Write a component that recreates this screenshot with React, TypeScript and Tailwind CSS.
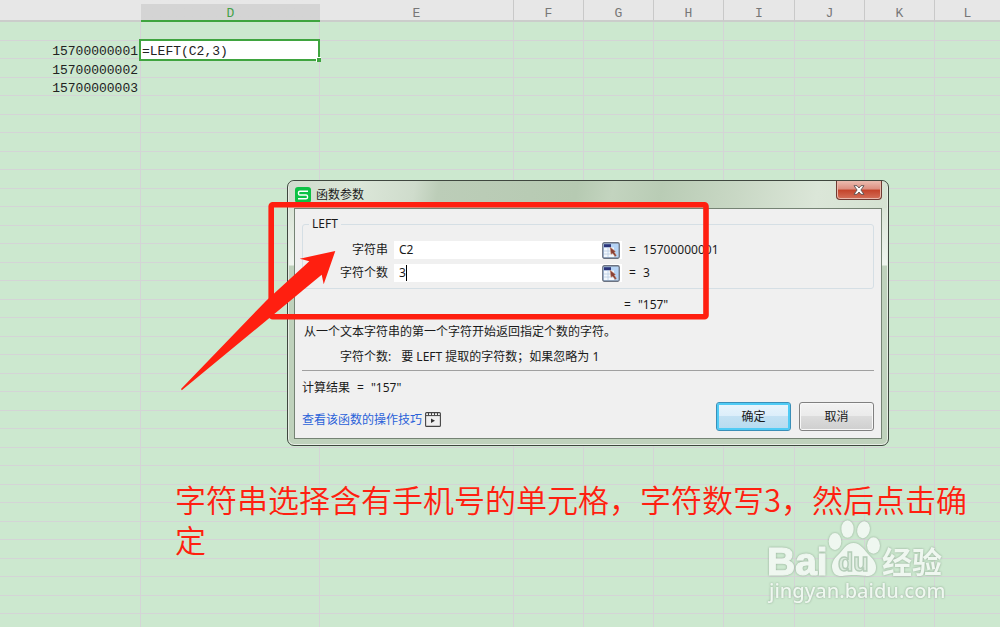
import React, { useState } from "react";

const COLUMNS = [
  { name: "C", width: "w-[141px]" },
  { name: "D", width: "w-[179px]" },
  { name: "E", width: "w-[194px]" },
  { name: "F", width: "w-[70px]" },
  { name: "G", width: "w-[70px]" },
  { name: "H", width: "w-[70px]" },
  { name: "I", width: "w-[71px]" },
  { name: "J", width: "w-[70px]" },
  { name: "K", width: "w-[70px]" },
  { name: "L", width: "w-auto" },
];

const PHONES: Record<number, string> = {
  2: "15700000001",
  3: "15700000002",
  4: "15700000003",
};

const ROWS = Array.from({ length: 33 }, (_, i) => i + 1);

function headerStyle(name: string) {
  if (name === "C") return "border-b-2 border-b-[#cbcdcb]";
  if (name === "D")
    return "border-b-2 border-[#3fa43f] bg-linear-to-b from-[#e7e7e7] from-20% to-[#d4d4d4] to-20% text-[#43a047]";
  if (name === "L") return "border-b-2 border-b-[#cbcdcb]";
  return "border-r border-b-2 border-r-[#c9c9c9] border-b-[#cbcdcb]";
}

function Sheet() {
  return (
    <table className="w-full table-fixed border-separate border-spacing-0 font-['Liberation_Mono','Noto_Sans_CJK_SC',monospace] text-[13px] leading-3">
      <thead>
        <tr className="h-[22px] bg-[#e7e7e7] text-[#777]">
          {COLUMNS.map(({ name, width }) => (
            <th
              key={name}
              scope="col"
              aria-label={name}
              className={`${width} h-[22px] p-0 font-normal ${headerStyle(name)}`}
            >
              {name === "C" ? null : <span className="block pt-2">{name}</span>}
            </th>
          ))}
        </tr>
      </thead>
      <tbody>
        {ROWS.map((row) => (
          <tr key={row} className={row % 2 ? "h-[19px]" : "h-[18px]"}>
            {COLUMNS.map(({ name }) => (
              <td
                key={name}
                className={`relative border-b border-[#d4d4d6] bg-[#cce8cf] p-0 text-right text-[#222] ${name === "L" ? "" : "border-r"}`}
              >
                {name === "C" && PHONES[row] ? (
                  <span className="block pt-[5px] pr-[2px]">{PHONES[row]}</span>
                ) : null}
                {name === "D" && row === 2 ? <ActiveCell /> : null}
              </td>
            ))}
          </tr>
        ))}
      </tbody>
    </table>
  );
}

function ActiveCell() {
  return (
    <div className="absolute -top-[2px] -right-[1px] -left-[2px] z-10 h-[22px] border-2 border-[#3fa43f] bg-white">
      <input
        aria-label="D2"
        defaultValue="=LEFT(C2,3)"
        className="block h-full w-full bg-white pt-[2px] pl-px text-[13px] text-[#222] outline-none"
      />
      <span className="absolute -right-[3px] -bottom-[3px] size-[5px] border-t border-l border-white bg-[#3fa43f]" />
    </div>
  );
}

function AppLogo() {
  return (
    <svg viewBox="0 0 16 16" className="size-4" aria-hidden="true">
      <rect width="16" height="16" rx="3" fill="#0cc244" />
      <path
        d="M13 4.300H5Q3.500 4.300 3.500 5.500V6.800Q3.500 8 5 8H11Q12.500 8 12.500 9.200V10.500Q12.500 11.700 11 11.700H3"
        fill="none"
        stroke="#fff"
        strokeWidth="1.4"
      />
    </svg>
  );
}

function PickRangeIcon() {
  return (
    <svg viewBox="0 0 18 17" className="h-[17px] w-[18px]" aria-hidden="true">
      <rect x="0.75" y="0.75" width="16.5" height="15.5" rx="1.5" fill="#b5d3f5" stroke="#6b7280" strokeWidth="1.3" />
      <path d="M2 5.5H12V15H2Z" fill="#f3f8fd" />
      <path d="M2 9H11M2 12H11M6 6V15" stroke="#b8cbe2" strokeWidth="0.8" />
      <rect x="2" y="2.2" width="7" height="3" fill="#2b357a" />
      <path d="M8 5L13.5 9.5L12.3 10.2L14.5 13.5L13 14.5L10.8 11.4L9 12.2Z" fill="#8a4036" stroke="#cf9c80" strokeWidth="0.5" />
    </svg>
  );
}

function VideoIcon() {
  return (
    <svg viewBox="0 0 16 15" className="h-[15px] w-4" aria-hidden="true">
      <rect x="0.6" y="0.6" width="14.8" height="13.8" rx="1" fill="none" stroke="#444" strokeWidth="1.1" />
      <path d="M1 3.6H15M3.5 1V3.6M6.5 1V3.6M9.5 1V3.6M12.5 1V3.6" stroke="#444" strokeWidth="1" />
      <path d="M6 6.5L10 8.8L6 11.1Z" fill="#333" />
    </svg>
  );
}

type ArgumentRowProps = {
  id: string;
  label: string;
  value: string;
  result: string;
  focused?: boolean;
};

function ArgumentRow({ id, label, value, result, focused }: ArgumentRowProps) {
  const [text, setText] = useState(value);
  return (
    <div className="flex h-[18px] items-center">
      <label htmlFor={id} className="w-[85px] text-right">
        {label}
      </label>
      <div className="ml-[6px] flex h-[18px] w-[228px] items-center bg-white pr-[2px]">
        <div className="relative min-w-0 flex-1">
          <input
            id={id}
            value={text}
            onChange={(e) => setText(e.target.value)}
            className="block h-4 w-full bg-transparent pl-[5px] outline-none"
          />
          {focused ? <span className="absolute top-0 left-3 h-4 w-px bg-black" /> : null}
        </div>
        <button type="button" aria-label={`选择${label}`}>
          <PickRangeIcon />
        </button>
      </div>
      <span className="w-[21px] pl-[7px]">=</span>
      <output htmlFor={id}>{result}</output>
    </div>
  );
}

function FunctionDialog() {
  return (
    <section
      role="dialog"
      aria-labelledby="dialog-title"
      className="absolute top-[180px] left-[287px] w-[602px] rounded-[7px] border border-[#3f473f] bg-[linear-gradient(to_bottom,#c9d8c5_0px,#dbe6d8_30px,#f0f5ef_84px,#bfd2bc_85px,#bfd2bc_100%)] px-[6px] pb-[6px] font-['Noto_Sans','Noto_Sans_CJK_SC',sans-serif] text-[12px] leading-4 text-[#1a1a1a] shadow-[inset_0_0_0_1px_#e6eee4]"
    >
      <header className="-mx-[5px] flex h-[27px] items-start justify-between rounded-t-[6px] bg-[linear-gradient(100deg,#d0dccd_0%,#dbe6d8_12%,#cfdccc_21%,#bccdb8_25%,#b6cab2_48%,#c3d4bf_54%,#b9ccb5_62%,#c9d8c5_75%,#dbe6d8_88%,#d5e2d2_100%)] pl-[6px]">
        <h1 id="dialog-title" className="flex items-center gap-[5px] pt-[6px] font-normal">
          <AppLogo />
          函数参数
        </h1>
        <button
          type="button"
          aria-label="关闭"
          className="mr-[5px] flex h-[19px] w-[46px] items-center justify-center rounded-b-[4px] border border-t-0 border-[#6f3a33] bg-[linear-gradient(to_bottom,#ecbcb0_0%,#dd8e7f_45%,#c4432a_50%,#d4705a_100%)] shadow-[inset_0_0_0_1px_#eab8ab]"
        >
          <svg viewBox="0 0 12 10" className="h-[10px] w-3" aria-hidden="true">
            <path
              d="M1 0.700H4L6 3L8 0.700H11L7.900 5L11 9.300H8L6 7L4 9.300H1L4.100 5Z"
              fill="#fff"
              stroke="#5a5050"
              strokeWidth="0.9"
            />
          </svg>
        </button>
      </header>
      <div className="border border-[#758374] bg-[#f0f0f0] p-[7px]">
        <fieldset className="relative rounded-[3px] border border-[#d5dfe5] pb-[6px]">
          <legend className="ml-[6px] px-[3px]">LEFT</legend>
          <div className="flex flex-col gap-[5px] pt-[9px]">
            <ArgumentRow id="arg-text" label="字符串" value="C2" result="15700000001" />
            <ArgumentRow id="arg-count" label="字符个数" value="3" result="3" focused />
          </div>
        </fieldset>
        <p className="pt-2 pl-[322px]">
          =<span className="pl-[7px]">"157"</span>
        </p>
        <p className="pt-[11px] pl-[2px]">从一个文本字符串的第一个字符开始返回指定个数的字符。</p>
        <p className="pt-[9px] pl-[38px]">
          字符个数:<span className="pl-[10px]">要 LEFT 提取的字符数；如果忽略为 1</span>
        </p>
        <hr className="mt-[5px] border-[#a0a0a0]" />
        <p className="pt-[9px]">
          计算结果<span className="px-[7px]">=</span>"157"
        </p>
        <footer className="flex items-center justify-between pt-[6px]">
          <a href="#tips" className="flex items-center gap-[3px] pt-[6px] text-[#2a62d9]">
            查看该函数的操作技巧
            <VideoIcon />
          </a>
          <div className="flex gap-2">
            <button
              type="button"
              className="h-[29px] w-[75px] rounded-[3px] border border-[#3a8fb8] bg-[linear-gradient(to_bottom,#e9f5fc_0%,#dceefa_48%,#c3e1f3_50%,#b5dbf0_100%)] shadow-[inset_0_0_0_2px_#4fcbf5]"
            >
              确定
            </button>
            <button
              type="button"
              className="h-[29px] w-[75px] rounded-[3px] border border-[#808080] bg-[linear-gradient(to_bottom,#f2f2f2_0%,#ebebeb_48%,#dcdcdc_50%,#cfcfcf_100%)] shadow-[inset_0_0_0_1px_#f8f8f8]"
            >
              取消
            </button>
          </div>
        </footer>
      </div>
    </section>
  );
}

function Markup() {
  return (
    <svg
      viewBox="0 0 560 200"
      className="pointer-events-none absolute top-[195px] left-[175px] h-[200px] w-[560px]"
      aria-hidden="true"
    >
      <rect x="96.2" y="9.8" width="434.8" height="112" rx="1.5" fill="none" stroke="#ff1f10" strokeWidth="5.6" />
      <path d="M160.3 56L124.7 63.7L134.3 66.3L91.7 105.2L6 194L6.8 195.3L146.7 79.7L148.7 89.3Z" fill="#ff1f10" />
    </svg>
  );
}

function Watermark() {
  return (
    <svg
      viewBox="0 0 190 90"
      className="pointer-events-none absolute top-[517px] left-[762px] h-[90px] w-[190px] drop-shadow-[0_0_1px_#8fa892]"
      role="img"
      aria-label="Baidu 经验"
    >
      <g fill="#eff7f0">
        <ellipse cx="73" cy="24.5" rx="6.3" ry="8.5" />
        <ellipse cx="85.5" cy="12" rx="6.2" ry="8.7" />
        <ellipse cx="101.5" cy="12.8" rx="6.3" ry="8.5" transform="rotate(12 101.5 12.8)" />
        <ellipse cx="111.5" cy="28.5" rx="6.5" ry="8.3" />
        <path d="M91.5 26C84 26 81 33.5 76 38C71 43 69 47 70.5 53C72 58.5 77 59.5 82 58.8C88 57.8 96 57.8 102 58.8C108 59.5 112.5 58 113.8 53C115 47 112 43 107.5 38.5C102.5 33.5 99 26 91.5 26Z" />
        <text
          x="5"
          y="58"
          fontSize="39"
          fontWeight="700"
          fontFamily="Liberation Sans, sans-serif"
          stroke="#eff7f0"
          strokeWidth="1.2"
          strokeLinejoin="round"
        >
          Bai
        </text>
        <text x="120" y="56" fontSize="30" fontWeight="700" fontFamily="Noto Sans CJK SC, sans-serif">
          经验
        </text>
        <text x="7" y="81" fontSize="20" fontWeight="500" fontFamily="Noto Sans, sans-serif">
          jingyan.baidu.com
        </text>
      </g>
      <text
        x="76"
        y="54"
        fontSize="25"
        fontWeight="700"
        fontFamily="Liberation Sans, sans-serif"
        fill="#dcebde"
        stroke="#b4cdb8"
        strokeWidth="1.4"
      >
        du
      </text>
    </svg>
  );
}

export default function App() {
  return (
    <main className="relative h-screen overflow-hidden bg-[#cce8cf]">
      <Sheet />
      <FunctionDialog />
      <Markup />
      <p className="absolute top-[479px] right-[20px] left-[175px] font-['Noto_Sans_CJK_SC',sans-serif] text-[31px] leading-10 font-[350] text-[#ff1f10]">
        字符串选择含有手机号的单元格，字符数写3，然后点击确定
      </p>
      <Watermark />
    </main>
  );
}
